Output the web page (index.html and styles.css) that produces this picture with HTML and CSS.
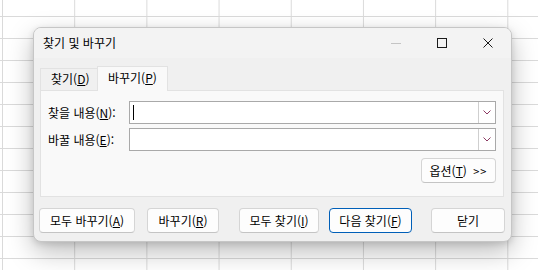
FILE: index.html
```html
<!DOCTYPE html>
<html lang="ko">
<head>
<meta charset="utf-8">
<title>찾기 및 바꾸기</title>
<link rel="stylesheet" href="styles.css">
</head>
<body>
<div class="sheet">
  <div class="dialog">
    <div class="titlebar">
      <span class="title">찾기 및 바꾸기</span>
      <div class="controls">
        <span class="ctl"><svg width="10" height="10" viewBox="0 0 10 10"><line x1="0" y1="5.5" x2="10" y2="5.5" stroke="#c4c4c4" stroke-width="1"/></svg></span>
        <span class="ctl"><svg width="10" height="10" viewBox="0 0 10 10"><rect x="0.5" y="0.5" width="9" height="9" fill="none" stroke="#1a1a1a" stroke-width="1"/></svg></span>
        <span class="ctl"><svg width="10" height="10" viewBox="0 0 10 10"><path d="M0.5 0.5 L9.5 9.5 M9.5 0.5 L0.5 9.5" fill="none" stroke="#1a1a1a" stroke-width="1"/></svg></span>
      </div>
    </div>
    <div class="content">
      <div class="tabs">
        <div class="tab">찾기(<u>D</u>)</div>
        <div class="tab active">바꾸기(<u>P</u>)</div>
      </div>
      <div class="panel">
        <div class="field-row">
          <span class="label">찾을 내용(<u>N</u>):</span>
          <div class="combo">
            <span class="caret"></span>
            <span class="drop"><svg width="8" height="5" viewBox="0 0 8 5"><polyline points="0.5,0.5 4,4 7.5,0.5" fill="none" stroke="#8c3a63" stroke-width="1"/></svg></span>
          </div>
        </div>
        <div class="field-row">
          <span class="label">바꿀 내용(<u>E</u>):</span>
          <div class="combo">
            <span class="drop"><svg width="8" height="5" viewBox="0 0 8 5"><polyline points="0.5,0.5 4,4 7.5,0.5" fill="none" stroke="#8c3a63" stroke-width="1"/></svg></span>
          </div>
        </div>
        <div class="options-row">
          <button class="btn btn-options">옵션(<u>T</u>) <span class="arrows">&gt;&gt;</span></button>
        </div>
      </div>
      <div class="actions">
        <button class="btn btn-all-replace">모두 바꾸기(<u>A</u>)</button>
        <button class="btn btn-replace">바꾸기(<u>R</u>)</button>
        <button class="btn btn-find-all">모두 찾기(<u>I</u>)</button>
        <button class="btn btn-find-next">다음 찾기(<u>F</u>)</button>
        <button class="btn btn-close">닫기</button>
      </div>
    </div>
  </div>
</div>
</body>
</html>
```

FILE: styles.css
```css
* { box-sizing: border-box; }

html, body {
  margin: 0;
  padding: 0;
}

body {
  width: 538px;
  height: 270px;
  overflow: hidden;
  font-family: "Noto Sans CJK KR", "Malgun Gothic", sans-serif;
  font-size: 12px;
  color: #000;
}

.sheet {
  position: relative;
  width: 538px;
  height: 270px;
  background-color: #fff;
  background-image:
    linear-gradient(to right, #dadada 1px, transparent 1px),
    linear-gradient(to bottom, #dadada 1px, transparent 1px);
  background-size: 72.2px 22px;
  background-position: 2px 16px;
}

.dialog {
  position: absolute;
  left: 33px;
  top: 27px;
  width: 479px;
  height: 215px;
  background: #f0f0f0;
  border: 1px solid #c6c6c6;
  border-radius: 8px;
  box-shadow: 0 10px 26px rgba(0, 0, 0, 0.26), 0 2px 6px rgba(0, 0, 0, 0.12);
  overflow: hidden;
}

.titlebar {
  height: 30px;
  display: flex;
  align-items: center;
  justify-content: space-between;
  background: #f3f3f3;
  padding-left: 9px;
}

.title {
  font-size: 12px;
  line-height: 16px;
  color: #000;
}

.controls {
  display: flex;
  height: 30px;
}

.ctl {
  width: 46px;
  height: 30px;
  display: flex;
  align-items: center;
  justify-content: center;
}

.ctl svg { display: block; }

.content {
  padding: 8px 7px 8px 6px;
}

.tabs {
  display: flex;
  height: 24px;
  position: relative;
  z-index: 1;
}

.tab {
  height: 22px;
  margin-top: 2px;
  padding: 0 8px;
  border: 1px solid #e2e2e2;
  border-bottom: none;
  line-height: 20px;
  background: #f0f0f0;
  white-space: nowrap;
}

.tab:first-child {
  width: 57px;
  border-right: none;
  padding: 0 0 0 10px;
}

.tab.active {
  width: 71px;
  height: 25px;
  margin-top: 0;
  padding: 0 0 0 10px;
  background: #f9f9f9;
  line-height: 22px;
}

.panel {
  height: 107px;
  background: #f9f9f9;
  border: 1px solid #e2e2e2;
  padding: 10px 7px 0 7px;
}

.field-row {
  display: flex;
  align-items: center;
  height: 23px;
  margin-bottom: 4px;
}

.label {
  width: 81px;
  flex: none;
  white-space: nowrap;
  line-height: 16px;
}

.combo {
  flex: 1;
  height: 23px;
  background: #fff;
  border: 1px solid #a9a9a9;
  display: flex;
  align-items: center;
  justify-content: space-between;
  padding-left: 3px;
}

.caret {
  width: 1px;
  height: 15px;
  background: #000;
}

.drop {
  margin-left: auto;
  width: 17px;
  height: 21px;
  border-left: 1px solid #cfcfcf;
  display: flex;
  align-items: center;
  justify-content: center;
}

.drop svg { display: block; }

.options-row {
  display: flex;
  justify-content: flex-end;
  margin-top: 7px;
}

.btn {
  height: 25px;
  padding: 0;
  font-family: inherit;
  font-size: 12px;
  color: #000;
  background: #fdfdfd;
  border: 1px solid #d5d5d5;
  border-bottom-color: #c4c4c4;
  border-radius: 4px;
  line-height: 16px;
  white-space: nowrap;
}

.btn-options { width: 75px; }
.arrows { margin-left: 3px; letter-spacing: 1px; font-size: 11px; }

.actions {
  display: flex;
  margin: 11px -1px 0 -1px;
}

.btn-all-replace { width: 96px; }
.btn-replace { width: 72px; margin-left: 12px; }
.btn-find-all { width: 80px; margin-left: 20px; }
.btn-find-next { width: 83px; margin-left: 10px; border-color: #005fb8; }
.btn-close { width: 74px; margin-left: 19px; }

u { text-decoration-thickness: 1px; text-underline-offset: 1px; }
```
